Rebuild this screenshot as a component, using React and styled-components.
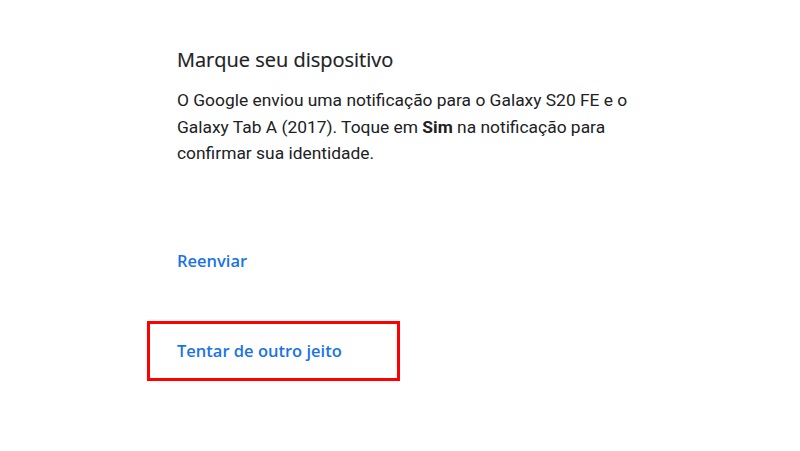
import React from "react";
import styled, { createGlobalStyle } from "styled-components";

const Global = createGlobalStyle`
  html, body { margin: 0; padding: 0; background: #fff; }
  body { width: 800px; height: 451px; overflow: hidden; }
`;

const Page = styled.main`
  padding: 44px 0 0 177px;
  display: flex;
  flex-direction: column;
`;

const Title = styled.h1`
  margin: 0;
  font-family: "Open Sans", "Noto Sans", sans-serif;
  font-weight: 500;
  font-size: 20px;
  line-height: 32px;
  color: #202124;
  -webkit-text-stroke: 0.2px #202124;
`;

const Body = styled.p`
  margin: 11px 0 0;
  width: 480px;
  font-family: Roboto, "Liberation Sans", sans-serif;
  font-size: 17.4px;
  line-height: 26.5px;
  color: #202124;
  b { font-weight: 700; }
`;

const LinkButton = styled.a`
  font-family: "Open Sans", "Noto Sans", sans-serif;
  font-weight: 600;
  font-size: 16.5px;
  line-height: 24px;
  color: #1a73e8;
  text-decoration: none;
`;

const ResendRow = styled.div`
  margin-top: 82px;
  display: flex;
`;

const Highlight = styled.div`
  margin: 48px 0 0 -30px;
  width: 253px;
  height: 60px;
  box-sizing: border-box;
  border: 3px solid #ff0000;
  display: flex;
  align-items: center;
  padding: 0 0 0 27px;
`;

export default function App() {
  return (
    <>
      <Global />
      <Page>
        <Title>Marque seu dispositivo</Title>
        <Body>
          O Google enviou uma notificação para o Galaxy S20 FE e o Galaxy Tab A
          (2017). Toque em <b>Sim</b> na notificação para confirmar sua
          identidade.
        </Body>
        <ResendRow>
          <LinkButton href="#">Reenviar</LinkButton>
        </ResendRow>
        <Highlight>
          <LinkButton href="#">Tentar de outro jeito</LinkButton>
        </Highlight>
      </Page>
    </>
  );
}
